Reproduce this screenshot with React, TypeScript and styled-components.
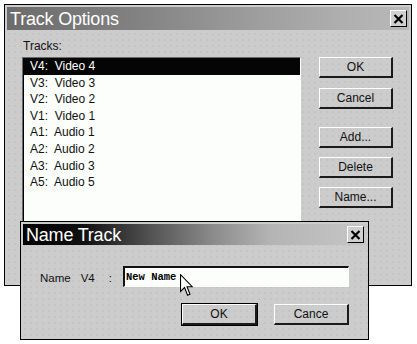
import React from "react";
import styled, { createGlobalStyle } from "styled-components";

const GlobalStyle = createGlobalStyle`
  html, body {
    margin: 0;
    padding: 0;
    background: #ffffff;
  }
  body {
    font-family: "Liberation Sans", Arial, sans-serif;
  }
`;

const tracks = [
  "V4:  Video 4",
  "V3:  Video 3",
  "V2:  Video 2",
  "V1:  Video 1",
  "A1:  Audio 1",
  "A2:  Audio 2",
  "A3:  Audio 3",
  "A5:  Audio 5",
];

const Desktop = styled.div`
  position: relative;
  width: 417px;
  height: 344px;
  overflow: hidden;
  background: #fff;
`;

const Window = styled.div<{ $left: number; $top: number; $w: number; $h: number }>`
  position: absolute;
  left: ${(p) => p.$left}px;
  top: ${(p) => p.$top}px;
  width: ${(p) => p.$w}px;
  height: ${(p) => p.$h}px;
  box-sizing: border-box;
  border: 1px solid #000;
  padding: 2px;
  display: flex;
  flex-direction: column;
  background-color: #cccccc;
  background-image: radial-gradient(circle, #bababa 0.6px, transparent 0.8px);
  background-size: 6px 6px;
  background-position: 1px 2px;
`;

const TitleBar = styled.div<{ $dark?: boolean; $h: number }>`
  height: ${(p) => p.$h}px;
  flex: none;
  display: flex;
  align-items: center;
  justify-content: space-between;
  padding: 0 2px 0 3px;
  background: ${(p) =>
    p.$dark
      ? "linear-gradient(90deg, #000 0%, #111 18%, #555 38%, #8a8a8a 55%, #b4b4b4 72%, #c6c6c6 100%)"
      : "linear-gradient(90deg, #6c6c6c 0%, #808080 30%, #9c9c9c 60%, #b0b0b0 85%, #b8b8b8 100%)"};
`;

const Title = styled.span`
  color: #fff;
  font-size: 18px;
  line-height: 20px;
  letter-spacing: -0.2px;
`;

const CloseBox = styled.div`
  width: 17px;
  height: 17px;
  box-sizing: border-box;
  background: #d0d0d0;
  border-top: 1px solid #fff;
  border-left: 1px solid #fff;
  border-right: 1px solid #000;
  border-bottom: 1px solid #000;
  display: flex;
  align-items: center;
  justify-content: center;
`;

const Body = styled.div`
  display: flex;
  padding: 9px 16px 0 15px;
  gap: 18px;
`;

const LeftCol = styled.div`
  display: flex;
  flex-direction: column;
  gap: 4px;
  width: 279px;
`;

const Label = styled.div`
  font-size: 12px;
  line-height: 14px;
  color: #111;
  padding-left: 1px;
`;

const ListBox = styled.div`
  height: 214px;
  box-sizing: border-box;
  background: #fcfefc;
  border-top: 1px solid #6a6a6a;
  border-left: 1px solid #6a6a6a;
  border-right: 1px solid #fff;
  border-bottom: 1px solid #fff;
  box-shadow: inset 1px 0 0 #000;
`;

const Row = styled.div<{ $selected?: boolean }>`
  height: 16.6px;
  line-height: 17px;
  padding-left: 7px;
  font-size: 12px;
  white-space: pre;
  color: ${(p) => (p.$selected ? "#fff" : "#111")};
  background: ${(p) => (p.$selected ? "#050505" : "transparent")};
`;

const RightCol = styled.div`
  display: flex;
  flex-direction: column;
  padding-top: 18px;
`;

const Button = styled.div<{ $w: number; $default?: boolean; $gap?: number }>`
  width: ${(p) => p.$w}px;
  height: 21px;
  box-sizing: border-box;
  margin-top: ${(p) => p.$gap ?? 0}px;
  border-top: 1px solid #fff;
  border-left: 1px solid #fff;
  border-right: 2px solid #1a1a1a;
  border-bottom: 2px solid #1a1a1a;
  outline: ${(p) => (p.$default ? "1px solid #000" : "none")};
  display: flex;
  align-items: center;
  justify-content: center;
  font-size: 12px;
  color: #111;
`;

const DialogBody = styled.div`
  display: flex;
  flex-direction: column;
  padding: 21px 17px 0 17px;
`;

const FieldRow = styled.div`
  display: flex;
  align-items: center;
`;

const FieldLabel = styled.div`
  width: 83px;
  display: flex;
  gap: 10px;
  font-size: 11.5px;
  color: #111;
  padding-top: 2px;
`;

const Colon = styled.span`
  margin-left: 4px;
`;

const Input = styled.div`
  flex: 1;
  height: 21px;
  box-sizing: border-box;
  background: #fcfefc;
  border-top: 2px solid #111;
  border-left: 2px solid #111;
  border-right: 1px solid #fff;
  border-bottom: 1px solid #fff;
  padding-left: 1px;
  display: flex;
  align-items: center;
  font-family: "Liberation Mono", "DejaVu Sans Mono", monospace;
  font-weight: bold;
  font-size: 10.5px;
  color: #000;
`;

const ButtonRow = styled.div`
  display: flex;
  justify-content: flex-end;
  gap: 17px;
  margin-top: 17px;
`;

const Cursor = styled.svg`
  position: absolute;
  left: 180px;
  top: 274px;
`;

const CloseIcon = () => (
  <svg width="11" height="10" viewBox="0 0 11 10">
    <path d="M1.5 1 L9.5 9 M9.5 1 L1.5 9" stroke="#000" strokeWidth="2.2" />
  </svg>
);

export default function App() {
  return (
    <Desktop>
      <GlobalStyle />
      <Window $left={4} $top={4} $w={408} $h={282}>
        <TitleBar $h={23}>
          <Title>Track Options</Title>
          <CloseBox>
            <CloseIcon />
          </CloseBox>
        </TitleBar>
        <Body>
          <LeftCol>
            <Label>Tracks:</Label>
            <ListBox>
              {tracks.map((t, i) => (
                <Row key={t} $selected={i === 0}>
                  {t}
                </Row>
              ))}
            </ListBox>
          </LeftCol>
          <RightCol>
            <Button $w={74}>OK</Button>
            <Button $w={74} $gap={10}>Cancel</Button>
            <Button $w={74} $gap={18}>Add...</Button>
            <Button $w={74} $gap={9}>Delete</Button>
            <Button $w={74} $gap={9}>Name...</Button>
          </RightCol>
        </Body>
      </Window>

      <Window $left={20} $top={221} $w={349} $h={119}>
        <TitleBar $dark $h={21}>
          <Title>Name Track</Title>
          <CloseBox>
            <CloseIcon />
          </CloseBox>
        </TitleBar>
        <DialogBody>
          <FieldRow>
            <FieldLabel>
              <span>Name</span>
              <span>V4</span>
              <Colon>:</Colon>
            </FieldLabel>
            <Input>New Name</Input>
          </FieldRow>
          <ButtonRow>
            <Button $w={75} $default>OK</Button>
            <Button $w={75}>Cance</Button>
          </ButtonRow>
        </DialogBody>
      </Window>

      <Cursor width="13" height="23" viewBox="0 0 12 21">
        <path
          d="M0.5 0.5 L0.5 16 L4.2 12.4 L7 19.5 L9.2 18.6 L6.5 11.6 L11.3 11.6 Z"
          fill="#fff"
          stroke="#000"
          strokeWidth="1"
          strokeLinejoin="miter"
        />
      </Cursor>
    </Desktop>
  );
}
